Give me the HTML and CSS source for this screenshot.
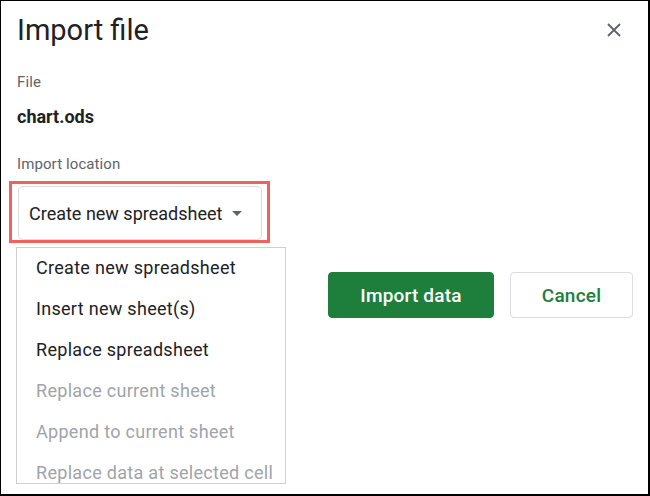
FILE: index.html
```html
<!DOCTYPE html>
<html>
<head>
<meta charset="utf-8">
<link rel="stylesheet" href="styles.css">
</head>
<body>
<div class="frame">
  <div class="header">
    <h1 class="title">Import file</h1>
    <svg class="close" width="14" height="14" viewBox="0 0 14 14"><path d="M1 1 L13 13 M13 1 L1 13" stroke="#5f6368" stroke-width="1.8" fill="none"/></svg>
  </div>
  <div class="label label-file">File</div>
  <div class="filename">chart.ods</div>
  <div class="label label-loc">Import location</div>
  <div class="select-wrap">
    <div class="highlight">
      <div class="select">
        <span>Create new spreadsheet</span>
        <span class="caret"></span>
      </div>
    </div>
    <div class="menu">
      <div class="item">Create new spreadsheet</div>
      <div class="item">Insert new sheet(s)</div>
      <div class="item">Replace spreadsheet</div>
      <div class="item disabled">Replace current sheet</div>
      <div class="item disabled">Append to current sheet</div>
      <div class="item disabled">Replace data at selected cell</div>
    </div>
  </div>
  <div class="actions">
    <button class="btn primary">Import data</button>
    <button class="btn secondary">Cancel</button>
  </div>
</div>
</body>
</html>
```
FILE: styles.css
```css
* { box-sizing: border-box; }
html, body { margin: 0; padding: 0; background: #fff; }
body { font-family: Roboto, "Noto Sans", Arial, sans-serif; color: #202124; }
.frame {
  width: 650px;
  height: 496px;
  border-top: 1px solid #000;
  border-left: 1px solid #000;
  border-right: 2px solid #000;
  border-bottom: 2px solid #000;
  padding: 11px 15px 0 16px;
  overflow: hidden;
}
.header { display: flex; justify-content: space-between; align-items: flex-start; }
.title {
  margin: 0;
  font-size: 29px;
  font-weight: 400;
  line-height: 36px;
  color: #202124;
}
.close { margin-top: 11px; margin-right: 12px; }
.label {
  font-size: 15px;
  line-height: 20px;
  color: #5f6368;
  letter-spacing: 0.1px;
}
.label-file { margin-top: 24px; }
.filename {
  margin-top: 13px;
  font-size: 18px;
  font-weight: 700;
  line-height: 24px;
  color: #202124;
}
.label-loc { margin-top: 25px; }
.select-wrap { position: relative; margin-top: 7px; margin-left: -8px; }
.highlight {
  width: 261px;
  height: 62px;
  border: 3px solid #f0625d;
  padding: 2px 5px 0 6px;
}
.select {
  height: 54px;
  border: 1px solid #dadce0;
  border-radius: 5px;
  display: flex;
  align-items: center;
  padding-left: 10px;
  font-size: 18px;
  color: #202124;
}
.caret {
  margin-left: 10px;
  width: 0; height: 0;
  border-left: 5px solid transparent;
  border-right: 5px solid transparent;
  border-top: 5px solid #5f6368;
  margin-top: 1px;
}
.menu {
  position: absolute;
  left: 7px;
  top: 66px;
  width: 270px;
  height: 237px;
  background: #fff;
  border: 1px solid #d0d0d0;
  overflow: hidden;
}
.item {
  height: 41px;
  line-height: 40px;
  padding-left: 19px;
  font-size: 18px;
  letter-spacing: 0.3px;
  color: #202124;
  white-space: nowrap;
}
.item.disabled { color: #a0a4a8; }
.actions {
  display: flex;
  justify-content: flex-end;
  gap: 16px;
  margin-top: 29px;
}
.btn {
  height: 46px;
  border-radius: 4px;
  font-family: Roboto, Arial, sans-serif;
  font-size: 19px;
  font-weight: 500;
  letter-spacing: 0.2px;
  cursor: pointer;
  padding: 0;
}
.primary {
  width: 166px;
  background: #1e7e3c;
  border: 1px solid #1e7e3c;
  color: #fff;
}
.secondary {
  width: 123px;
  background: #fff;
  border: 1px solid #dadce0;
  color: #1e7e3c;
}
```
